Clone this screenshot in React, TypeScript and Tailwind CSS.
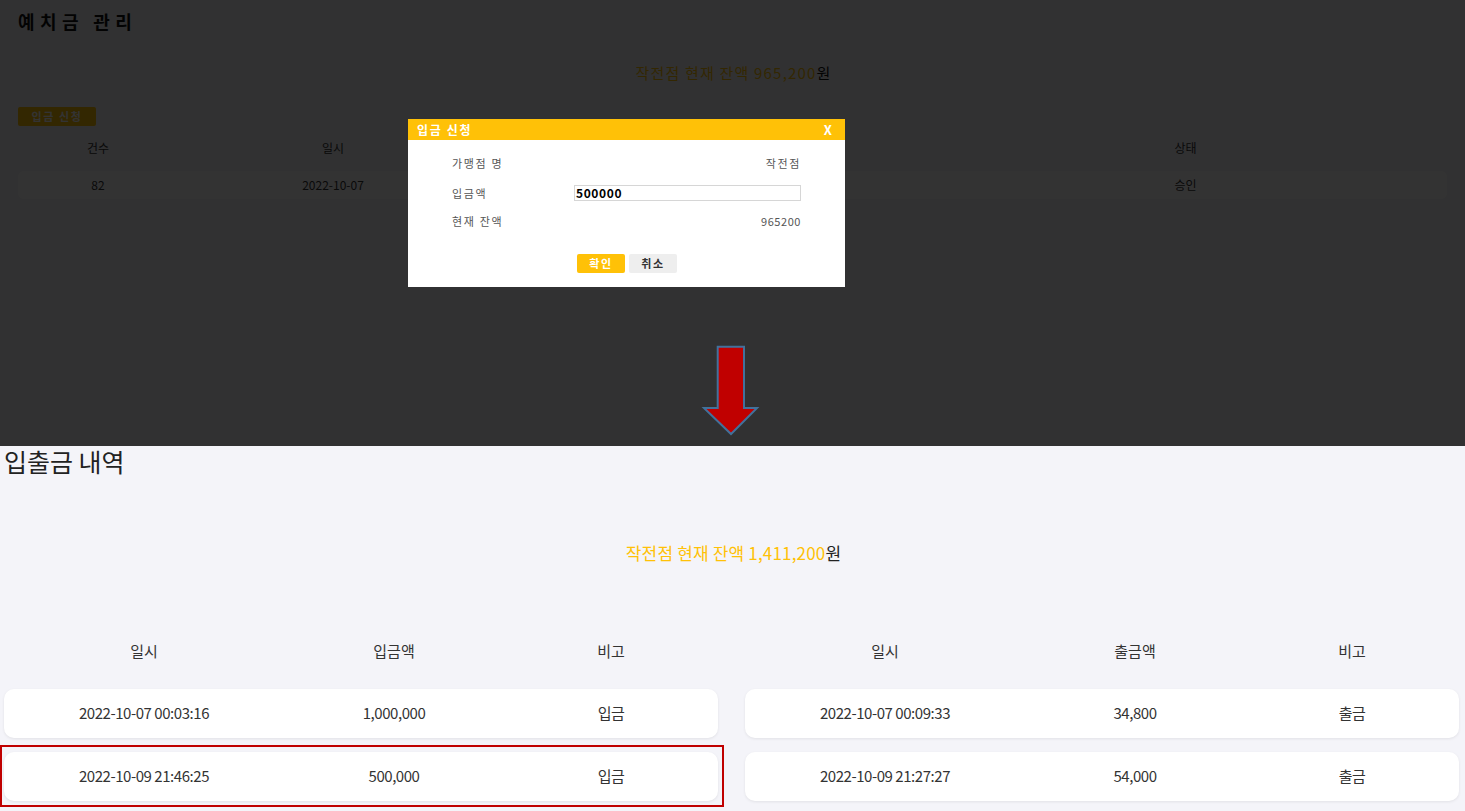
import React from 'react';

// 입출금 내역 화면 캡처: 위는 입금 신청 모달, 아래는 결과 목록

const font = { fontFamily: '"Noto Sans CJK KR", "Noto Sans", sans-serif' };

const deposits = [
  { date: '2022-10-07 00:03:16', amount: '1,000,000', note: '입금' },
  { date: '2022-10-09 21:46:25', amount: '500,000', note: '입금' },
];

const withdrawals = [
  { date: '2022-10-07 00:09:33', amount: '34,800', note: '출금' },
  { date: '2022-10-09 21:27:27', amount: '54,000', note: '출금' },
];

function HistoryTable({ label, rows }: { label: string; rows: typeof deposits }) {
  return (
    <div>
      <div className="grid grid-cols-[280px_220px_1fr] h-[24px] items-center text-center text-[15px] text-[#333]">
        <span>일시</span>
        <span>{label}</span>
        <span>비고</span>
      </div>
      <div className="mt-[26px] flex flex-col gap-[14px]">
        {rows.map((r) => (
          <div
            key={r.date}
            className="grid grid-cols-[280px_220px_1fr] h-[49px] items-center text-center text-[15px] text-[#333] bg-white rounded-[10px] shadow-[0_1px_3px_rgba(0,0,0,0.08)] tracking-[-0.03em]"
          >
            <span>{r.date}</span>
            <span>{r.amount}</span>
            <span>{r.note}</span>
          </div>
        ))}
      </div>
    </div>
  );
}

function DepositModal() {
  return (
    <div className="absolute left-[408px] top-[119px] w-[437px] h-[168px] bg-white text-[11px] text-[#555] tracking-[0.15em]">
      <div className="h-[21px] bg-[#ffc107] flex items-center justify-between pl-[9px] pr-[13px] text-white font-bold text-[12px]">
        <span>입금 신청</span>
        <span className="text-[13px] tracking-normal">X</span>
      </div>
      <div className="px-[44px] pt-[13px] grid grid-cols-[122px_227px] gap-y-[10px] items-center">
        <span className="h-[20px] leading-[20px]">가맹점 명</span>
        <span className="text-right">작전점</span>
        <span className="h-[16px] leading-[16px] mt-[2px]">입금액</span>
        <div className="h-[16px] mt-[2px] border border-[#d6d6d6] flex items-center pl-[1px] text-[12px] font-semibold text-black tracking-[0.05em]">
          500000
        </div>
        <span className="h-[20px] leading-[20px]">현재 잔액</span>
        <span className="text-right tracking-[0.05em]">965200</span>
      </div>
      <div className="mt-[23px] flex justify-center gap-[4px] pl-[1px]">
        <button className="w-[48px] h-[19px] rounded-[2px] bg-[#ffc107] text-white font-bold text-[11px] tracking-[0.15em]">확인</button>
        <button className="w-[48px] h-[19px] rounded-[2px] bg-[#eeeeee] text-[#333] font-bold text-[11px] tracking-[0.15em]">취소</button>
      </div>
    </div>
  );
}

export default function App() {
  return (
    <div className="w-[1465px] h-[811px] overflow-hidden bg-[#f4f4f9]" style={font}>
      {/* 위: 예치금 관리 + 모달 */}
      <section className="relative h-[446px] overflow-hidden bg-[#f4f4f9]">
        <div className="px-[18px] pt-[10px]">
          <h1 className="text-[18px] font-bold text-[#111] leading-[22px] tracking-[0.3em]">예치금 관리</h1>
          <p className="mt-[31px] text-center text-[15px] leading-[20px] pl-[2px] tracking-[0.08em]">
            <span className="text-[#ffc107]">작전점 현재 잔액 965,200</span>
            <span className="text-[#111]">원</span>
          </p>
          <button className="mt-[24px] w-[78px] h-[19px] rounded-[2px] bg-[#ffc107] text-white text-[11px] font-bold tracking-[0.15em]">
            입금 신청
          </button>
          <div className="mt-[12px] grid grid-cols-[160px_310px_436px_1fr] h-[20px] items-center text-center text-[12px] text-[#333]">
            <span>건수</span>
            <span>일시</span>
            <span>입금액</span>
            <span>상태</span>
          </div>
          <div className="mt-[13px] grid grid-cols-[160px_310px_436px_1fr] h-[28px] items-center text-center text-[12px] text-[#333] bg-white rounded-[6px]">
            <span>82</span>
            <span>2022-10-07</span>
            <span>500,000</span>
            <span>승인</span>
          </div>
        </div>

        <div className="absolute inset-0 bg-black/80" />

        <DepositModal />

        <svg className="absolute left-[700px] top-[340px]" width="62" height="98" viewBox="0 0 62 98">
          <polygon
            points="17.7,6.7 44,6.7 44,68 57,68 31,94 4,68 17.7,68"
            fill="#c00000"
            stroke="#41719c"
            strokeWidth="2"
          />
        </svg>
      </section>

      {/* 아래: 입출금 내역 */}
      <section className="relative h-[365px]">
        <h2 className="pl-[4px] text-[25px] leading-[30px] text-[#222]">입출금 내역</h2>
        <p className="mt-[65px] text-center text-[17px] leading-[24px] pl-[2px] tracking-[0.01em]">
          <span className="text-[#ffc107]">작전점 현재 잔액 1,411,200</span>
          <span className="text-[#222]">원</span>
        </p>
        <div className="mt-[74px] grid grid-cols-2 gap-[27px] pl-[4px] pr-[6px]">
          <HistoryTable label="입금액" rows={deposits} />
          <HistoryTable label="출금액" rows={withdrawals} />
        </div>
        <div className="absolute left-0 top-[299px] w-[724px] h-[62px] border-2 border-[#c00000]" />
      </section>
    </div>
  );
}
